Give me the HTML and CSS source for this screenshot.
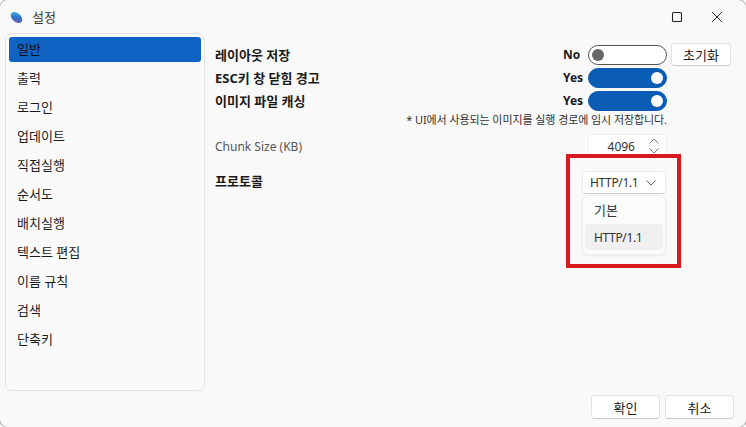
FILE: index.html
```html
<!DOCTYPE html>
<html lang="ko">
<head>
  <meta charset="UTF-8" />
  <title>설정</title>
  <link rel="stylesheet" href="styles.css">
</head>
<body>
  <div class="window">
    <div class="titlebar">
      <svg class="app-icon" width="14" height="14" viewBox="0 0 14 14">
        <defs>
          <linearGradient id="appGrad" x1="0" y1="0" x2="1" y2="0.8">
            <stop offset="0" stop-color="#4cc6ee"/>
            <stop offset="0.55" stop-color="#2f74c8"/>
            <stop offset="1" stop-color="#6a58b0"/>
          </linearGradient>
        </defs>
        <ellipse cx="7.5" cy="7.5" rx="6.6" ry="4.4" transform="rotate(42 7.5 7.5)" fill="url(#appGrad)"/>
      </svg>
      <span class="title">설정</span>
      <div class="win-btns">
        <svg width="12" height="12" viewBox="0 0 12 12"><rect x="1.5" y="1.5" width="9" height="9" rx="1" fill="none" stroke="#222" stroke-width="1.1"/></svg>
        <svg width="12" height="12" viewBox="0 0 12 12"><path d="M1 1L11 11M11 1L1 11" stroke="#222" stroke-width="1" fill="none"/></svg>
      </div>
    </div>

    <div class="body">
      <ul class="sidebar">
        <li class="active">일반</li>
        <li>출력</li>
        <li>로그인</li>
        <li>업데이트</li>
        <li>직접실행</li>
        <li>순서도</li>
        <li>배치실행</li>
        <li>텍스트 편집</li>
        <li>이름 규칙</li>
        <li>검색</li>
        <li>단축키</li>
      </ul>

      <div class="content">
        <div class="row row-first">
          <span class="label bold">레이아웃 저장</span>
          <span class="state">No</span>
          <span class="toggle"><i></i></span>
          <button class="btn btn-reset">초기화</button>
        </div>
        <div class="row">
          <span class="label bold">ESC키 창 닫힘 경고</span>
          <span class="state">Yes</span>
          <span class="toggle on"><i></i></span>
          <span class="spacer"></span>
        </div>
        <div class="row">
          <span class="label bold">이미지 파일 캐싱</span>
          <span class="state">Yes</span>
          <span class="toggle on"><i></i></span>
          <span class="spacer"></span>
        </div>
        <div class="note">* UI에서 사용되는 이미지를 실행 경로에 임시 저장합니다.</div>
        <div class="row row-chunk">
          <span class="label latin">Chunk Size (KB)</span>
          <div class="spin">
            <span class="latin">4096</span>
            <div class="arrows">
              <svg width="10" height="6" viewBox="0 0 10 6"><path d="M0.5 5.5L5 1L9.5 5.5" fill="none" stroke="#777"/></svg>
              <svg width="10" height="6" viewBox="0 0 10 6"><path d="M0.5 0.5L5 5L9.5 0.5" fill="none" stroke="#777"/></svg>
            </div>
          </div>
          <span class="spacer"></span>
        </div>
        <div class="row row-proto">
          <span class="label bold">프로토콜</span>
          <div class="combo-wrap">
            <div class="combo">
              <span class="latin tight">HTTP/1.1</span>
              <svg width="10" height="6" viewBox="0 0 10 6"><path d="M0.5 0.5L5 5L9.5 0.5" fill="none" stroke="#666"/></svg>
            </div>
            <div class="menu">
              <div class="opt opt-first">기본</div>
              <div class="opt sel"><span class="latin tight">HTTP/1.1</span></div>
            </div>
          </div>
          <span class="spacer spacer-wide"></span>
        </div>
      </div>
    </div>

    <div class="footer">
      <button class="btn btn-foot">확인</button>
      <button class="btn btn-foot">취소</button>
    </div>

    <div class="highlight"></div>
  </div>
</body>
</html>
```

FILE: styles.css
```css
* {
  box-sizing: border-box;
}
html, body {
  margin: 0;
  height: 100%;
  background: #fff;
}
body {
  font-family: 'Noto Sans', 'Noto Sans CJK KR', sans-serif;
  font-size: 13px;
  color: #1a1a1a;
  overflow: hidden;
}
.latin {
  font-size: 12px;
}
.tight {
  letter-spacing: -0.35px;
}
.window {
  position: relative;
  width: 746px;
  height: 427px;
  background: #f9f9f9;
  border-radius: 8px;
  box-shadow: 0 0 0 1px #b5b5b5;
  display: flex;
  flex-direction: column;
}
.titlebar {
  height: 33px;
  display: flex;
  align-items: center;
  padding: 0 23px 0 9px;
}
.title {
  margin-left: 9px;
  color: #333;
}
.win-btns {
  margin-left: auto;
  display: flex;
  gap: 28px;
}
.body {
  display: flex;
  height: 358px;
}
.sidebar {
  width: 200px;
  margin: 0 0 0 5px;
  padding: 3px;
  list-style: none;
  background: #fafafa;
  border: 1px solid #e3e3e3;
  border-radius: 7px;
}
.sidebar li {
  height: 25px;
  line-height: 25px;
  margin-bottom: 4px;
  padding-left: 8px;
  border-radius: 3px;
  color: #1a1a1a;
}
.sidebar li.active {
  background: #0f63c3;
  color: #111;
}
.content {
  flex: 1;
  padding: 10px 15px 0 10px;
}
.row {
  display: flex;
  align-items: center;
  height: 23px;
}
.label {
  margin-right: auto;
  color: #555;
}
.bold {
  font-weight: 700;
  color: #1a1a1a;
}
.state {
  width: 25px;
  font-size: 12px;
  font-weight: 700;
}
.toggle {
  width: 79px;
  height: 20px;
  border: 1px solid #555;
  border-radius: 10px;
  background: #fff;
  display: flex;
  align-items: center;
  padding: 0 3px;
}
.toggle i {
  width: 12px;
  height: 12px;
  border-radius: 50%;
  background: #666;
}
.toggle.on {
  background: #0b5cb5;
  border-color: #0b5cb5;
  justify-content: flex-end;
}
.toggle.on i {
  background: #fff;
}
.btn {
  font: inherit;
  background: #fff;
  border: 1px solid #e2e2e2;
  border-bottom-color: #c8c8c8;
  border-radius: 4px;
  color: #1a1a1a;
  padding: 0;
}
.btn-reset {
  width: 60px;
  height: 23px;
  margin-left: 4px;
}
.spacer {
  width: 64px;
}
.spacer-wide {
  width: 65px;
}
.note {
  height: 13px;
  line-height: 13px;
  margin-top: 1px;
  padding-right: 64px;
  text-align: right;
  font-size: 11px;
  letter-spacing: -0.08px;
  color: #333;
}
.row-chunk {
  height: 24px;
  margin-top: 8px;
}
.spin {
  width: 79px;
  height: 24px;
  background: #fff;
  border: 1px solid #efefef;
  border-radius: 4px;
  display: flex;
  align-items: center;
  justify-content: flex-end;
  padding-right: 7px;
  gap: 14px;
  color: #333;
}
.arrows {
  display: flex;
  flex-direction: column;
  gap: 4px;
}
.row-proto {
  margin-top: 13px;
  height: 23px;
  align-items: flex-start;
}
.combo-wrap {
  position: relative;
  width: 84px;
}
.combo {
  height: 23px;
  background: #fff;
  border: 1px solid #ececec;
  border-bottom-color: #cfcfcf;
  border-radius: 4px;
  display: flex;
  align-items: center;
  justify-content: space-between;
  padding: 0 9px 0 7px;
  color: #333;
}
.menu {
  position: absolute;
  top: 24px;
  left: 0;
  width: 84px;
  height: 60px;
  padding: 2px;
  background: #fbfbfb;
  border: 1px solid #ececec;
  border-radius: 6px;
  box-shadow: 0 1px 3px rgba(0,0,0,0.06);
}
.opt {
  height: 26px;
  line-height: 26px;
  padding-left: 9px;
  color: #333;
}
.opt-first {
  line-height: 24px;
}
.opt.sel {
  background: #f0f0f0;
  border-radius: 4px;
}
.footer {
  display: flex;
  justify-content: flex-end;
  gap: 5px;
  padding: 4px 12px 0 0;
}
.btn-foot {
  width: 69px;
  height: 24px;
}
.highlight {
  position: absolute;
  left: 566px;
  top: 154px;
  width: 115px;
  height: 114px;
  border: 4px solid #d9181f;
  pointer-events: none;
}
```
